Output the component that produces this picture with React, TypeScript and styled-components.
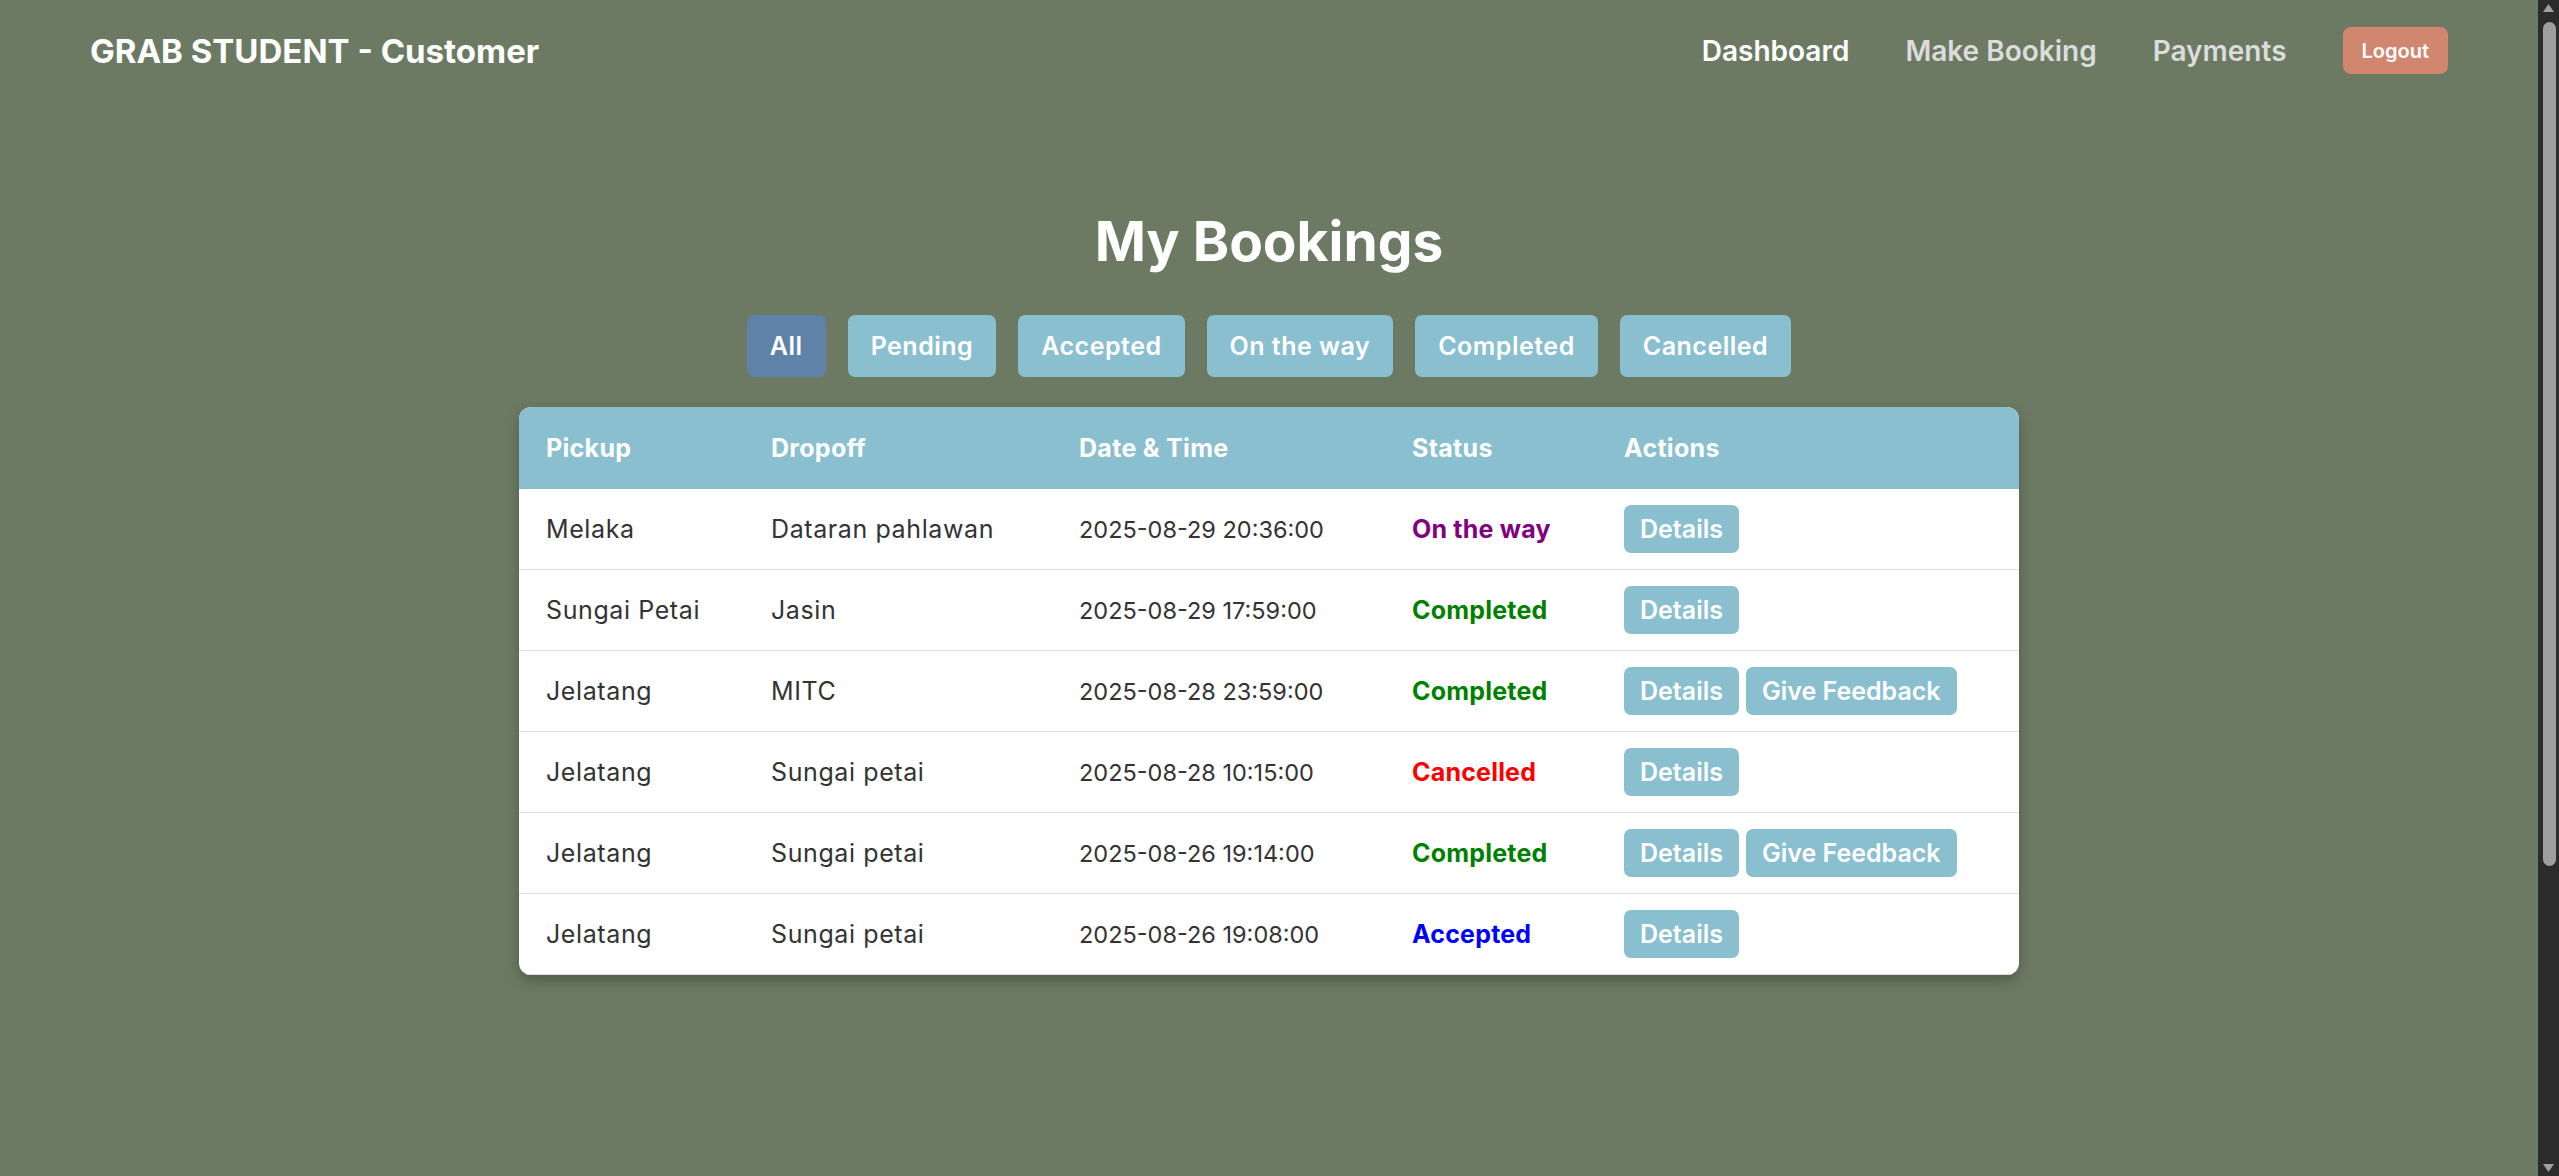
import React, { FC } from "react";
import styled, { createGlobalStyle } from "styled-components";

const GlobalStyle = createGlobalStyle`
  html, body {
    margin: 0;
    padding: 0;
  }
  body {
    background: #6c7a63;
    font-family: Inter, "Noto Sans", sans-serif;
  }
`;

const Shell = styled.div`
  display: flex;
  align-items: flex-start;
`;

const Page = styled.div`
  flex: 1;
  min-width: 0;
  min-height: 100vh;
`;

/* the browser's dark scrollbar, drawn as a rail beside the page */
const ScrollTrack = styled.div`
  flex-shrink: 0;
  width: 21px;
  height: 100vh;
  background: #2b2b2b;
  display: flex;
  flex-direction: column;
  align-items: center;
`;

const ScrollArrow = styled.svg`
  display: block;
  width: 21px;
  height: 18px;
  flex-shrink: 0;
`;

const ScrollThumb = styled.div`
  width: 13px;
  height: 844px;
  margin-top: 4px;
  margin-left: 2px;
  border-radius: 7px;
  background: #9f9f9f;
`;

const ScrollSpacer = styled.div`
  flex: 1;
`;

const Navbar = styled.header`
  display: flex;
  align-items: center;
  justify-content: space-between;
  height: 101px;
  padding: 0 90px;
`;

const Brand = styled.div`
  color: #fff;
  font-size: 33px;
  font-weight: 700;
`;

const NavLinks = styled.nav`
  display: flex;
  align-items: center;
  gap: 56px;
`;

const NavLink = styled.a<{ $active?: boolean }>`
  color: ${(p) => (p.$active ? "#ffffff" : "#dcdcdc")};
  font-size: 28px;
  font-weight: 600;
  text-decoration: none;
`;

const LogoutButton = styled.button`
  height: 47px;
  padding: 0 19px;
  border: none;
  border-radius: 8px;
  background: #d1876f;
  color: #fff;
  font-family: inherit;
  font-size: 20px;
  font-weight: 600;
`;

const Main = styled.main`
  padding: 108px 0 80px;
  display: flex;
  flex-direction: column;
  align-items: center;
`;

const Heading = styled.h2`
  margin: 0;
  color: #fff;
  font-size: 55px;
  line-height: 65px;
  font-weight: 700;
`;

const FilterBar = styled.div`
  display: flex;
  gap: 22px;
  margin-top: 41px;
`;

const FilterButton = styled.button<{ $active?: boolean }>`
  height: 62px;
  padding: 0 23px;
  border: none;
  border-radius: 7px;
  background: ${(p) => (p.$active ? "#5f82a8" : "#89bfcf")};
  color: #fff;
  font-family: inherit;
  font-size: 25px;
  letter-spacing: 0.5px;
  font-weight: 600;
`;

const TableCard = styled.div`
  width: 1500px;
  margin-top: 30px;
  background: #fff;
  border-radius: 12px;
  overflow: hidden;
  box-shadow: 0 6px 14px rgba(0, 0, 0, 0.25);
`;

const Table = styled.table`
  width: 100%;
  border-collapse: collapse;
  table-layout: fixed;
`;

const Th = styled.th<{ $w?: number }>`
  box-sizing: border-box;
  width: ${(p) => (p.$w ? `${p.$w}px` : "auto")};
  height: 82px;
  padding: 0 27px;
  background: #89bfcf;
  color: #fff;
  text-align: left;
  font-size: 25px;
  letter-spacing: 0.3px;
  font-weight: 700;
`;

const Td = styled.td<{ $tight?: boolean }>`
  height: 48px;
  padding: 16px 27px;
  border-bottom: 1px solid #dddddd;
  color: #333;
  font-size: ${(p) => (p.$tight ? "23.5px" : "25px")};
  letter-spacing: ${(p) => (p.$tight ? "0" : "0.6px")};
  white-space: nowrap;
`;

const statusColors: Record<string, string> = {
  "On the way": "#800080",
  Completed: "#008000",
  Cancelled: "#ff0000",
  Accepted: "#0000ff",
  Pending: "#d08a00",
};

const StatusText = styled.span<{ $status: string }>`
  color: ${(p) => statusColors[p.$status] || "#333"};
  font-weight: 700;
  letter-spacing: 0.2px;
`;

const ActionButton = styled.button`
  height: 48px;
  margin-right: 7px;
  padding: 0 16px;
  border: none;
  border-radius: 7px;
  background: #89bfcf;
  color: #fff;
  font-family: inherit;
  font-size: 25px;
  font-weight: 600;
  vertical-align: middle;
`;

const bookings = [
  { pickup: "Melaka", dropoff: "Dataran pahlawan", time: "2025-08-29 20:36:00", status: "On the way" },
  { pickup: "Sungai Petai", dropoff: "Jasin", time: "2025-08-29 17:59:00", status: "Completed" },
  { pickup: "Jelatang", dropoff: "MITC", time: "2025-08-28 23:59:00", status: "Completed", feedback: true },
  { pickup: "Jelatang", dropoff: "Sungai petai", time: "2025-08-28 10:15:00", status: "Cancelled" },
  { pickup: "Jelatang", dropoff: "Sungai petai", time: "2025-08-26 19:14:00", status: "Completed", feedback: true },
  { pickup: "Jelatang", dropoff: "Sungai petai", time: "2025-08-26 19:08:00", status: "Accepted" },
];

const filters = ["All", "Pending", "Accepted", "On the way", "Completed", "Cancelled"];

export const App: FC = () => {
  return (
    <Shell>
      <GlobalStyle />
      <Page>
        <Navbar>
          <Brand>GRAB STUDENT - Customer</Brand>
          <NavLinks>
            <NavLink $active>Dashboard</NavLink>
            <NavLink>Make Booking</NavLink>
            <NavLink>Payments</NavLink>
            <LogoutButton>Logout</LogoutButton>
          </NavLinks>
        </Navbar>
        <Main>
          <Heading>My Bookings</Heading>
          <FilterBar>
            {filters.map((f) => (
              <FilterButton key={f} $active={f === "All"}>
                {f}
              </FilterButton>
            ))}
          </FilterBar>
          <TableCard>
            <Table>
              <thead>
                <tr>
                  <Th $w={225}>Pickup</Th>
                  <Th $w={308}>Dropoff</Th>
                  <Th $w={333}>Date &amp; Time</Th>
                  <Th $w={212}>Status</Th>
                  <Th>Actions</Th>
                </tr>
              </thead>
              <tbody>
                {bookings.map((b, i) => (
                  <tr key={i}>
                    <Td>{b.pickup}</Td>
                    <Td>{b.dropoff}</Td>
                    <Td $tight>{b.time}</Td>
                    <Td>
                      <StatusText $status={b.status}>{b.status}</StatusText>
                    </Td>
                    <Td>
                      <ActionButton>Details</ActionButton>
                      {b.feedback && <ActionButton>Give Feedback</ActionButton>}
                    </Td>
                  </tr>
                ))}
              </tbody>
            </Table>
          </TableCard>
        </Main>
      </Page>
      <ScrollTrack>
        <ScrollArrow viewBox="0 0 21 18">
          <polygon points="10.5,4 16,12 5,12" fill="#9f9f9f" />
        </ScrollArrow>
        <ScrollThumb />
        <ScrollSpacer />
        <ScrollArrow viewBox="0 0 21 18">
          <polygon points="5,6 16,6 10.5,14" fill="#9f9f9f" />
        </ScrollArrow>
      </ScrollTrack>
    </Shell>
  );
};

export default App;
